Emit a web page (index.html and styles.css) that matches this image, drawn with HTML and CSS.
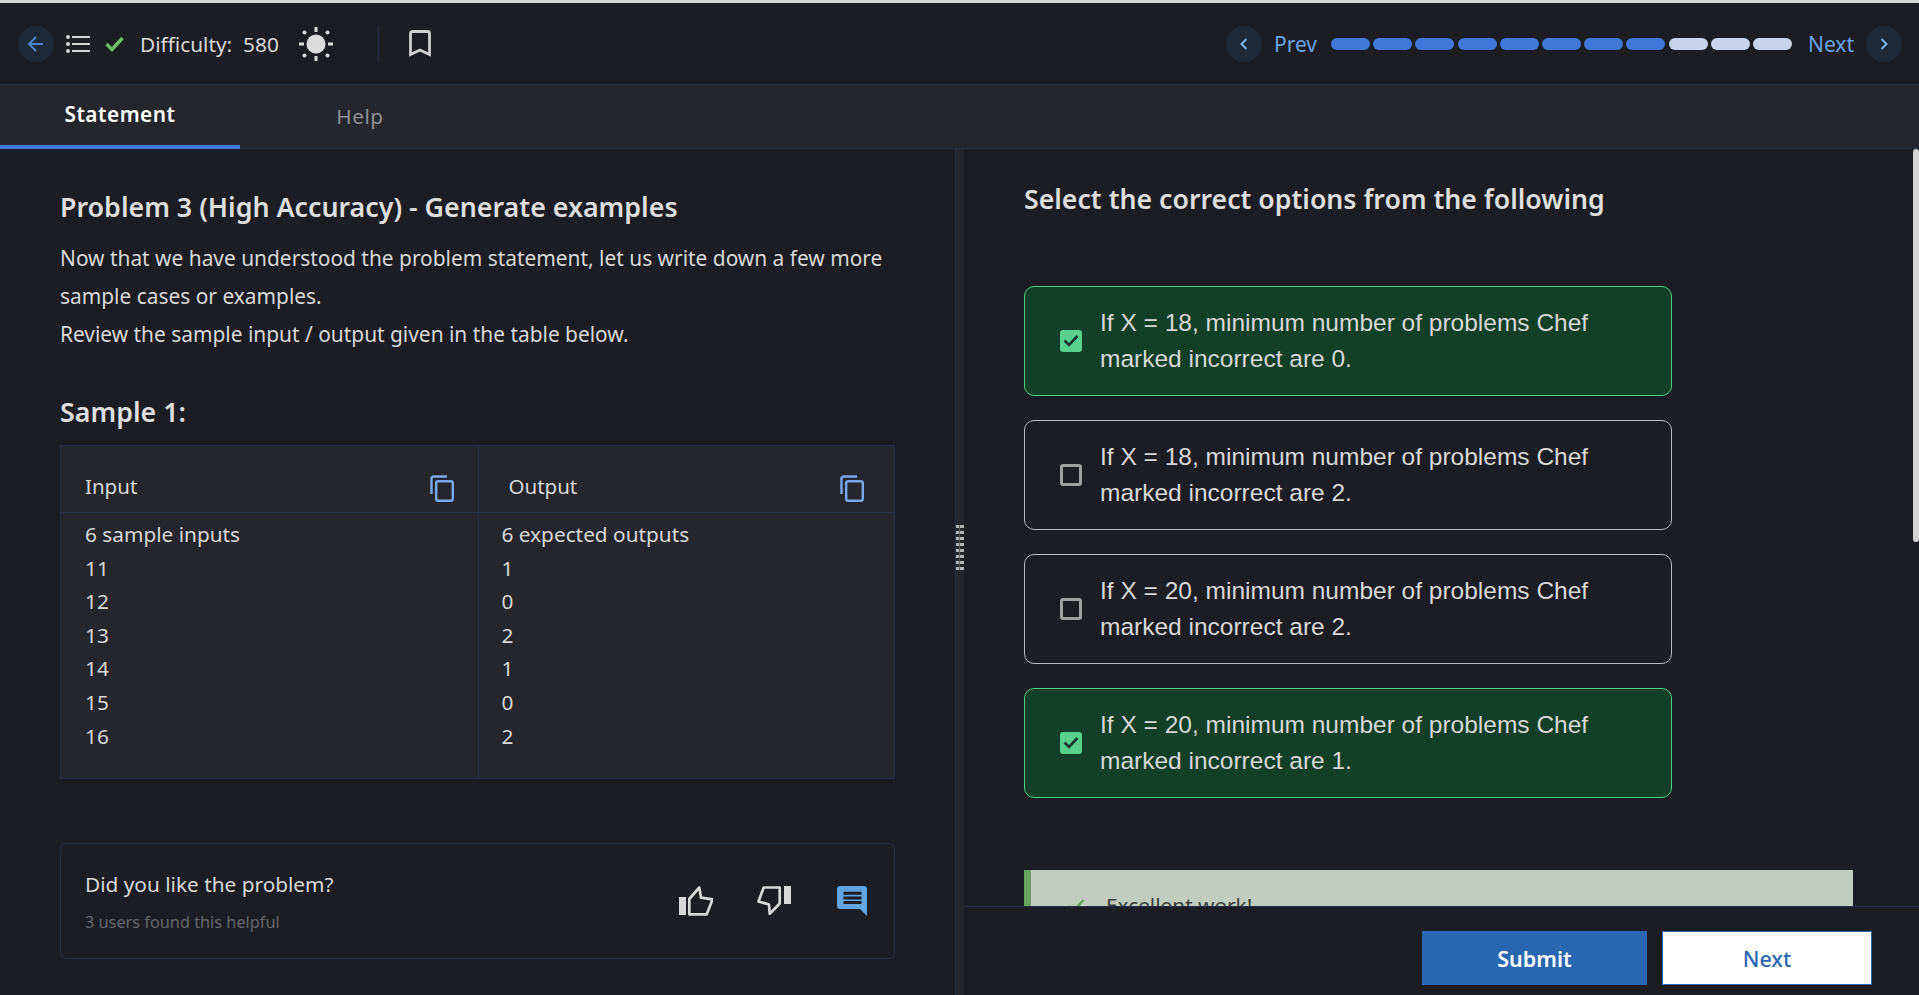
FILE: index.html
```html
<!DOCTYPE html>
<html lang="en">
<head>
  <meta charset="UTF-8" />
  <title>Problem 3 (High Accuracy) - Generate examples</title>
  <link rel="stylesheet" href="styles.css">
</head>
<body>
  <div class="topline"></div>

  <header class="header">
    <div class="header-left">
      <span class="round-btn">
        <svg width="20" height="20" viewBox="0 0 20 20" fill="none" stroke="#4f86c6" stroke-width="2"><path d="M17 10H3.500M10 3l-7 7 7 7"/></svg>
      </span>
      <svg class="list-icon" width="24" height="20" viewBox="0 0 24 20" fill="#d6d6d6"><circle cx="2" cy="3" r="2"/><circle cx="2" cy="10" r="2"/><circle cx="2" cy="17" r="2"/><rect x="6" y="2" width="18" height="2"/><rect x="6" y="9" width="18" height="2"/><rect x="6" y="16" width="18" height="2"/></svg>
      <svg class="check-icon" width="19" height="16" viewBox="0 0 19 16" fill="none" stroke="#6fbf6b" stroke-width="3.400"><path d="M1.500 8l5.500 5.500L17.500 2"/></svg>
      <span class="difficulty">Difficulty:</span>
      <span class="rating">580</span>
      <svg class="sun-icon" width="34" height="34" viewBox="0 0 34 34" fill="#dcdcdc">
        <circle cx="17" cy="17" r="9.500"/>
        <rect x="15.500" y="0" width="3" height="5"/><rect x="15.500" y="29" width="3" height="5"/>
        <rect x="0" y="15.500" width="5" height="3"/><rect x="29" y="15.500" width="5" height="3"/>
        <circle cx="5.500" cy="5.500" r="2"/><circle cx="28.500" cy="5.500" r="2"/><circle cx="5.500" cy="28.500" r="2"/><circle cx="28.500" cy="28.500" r="2"/>
      </svg>
      <span class="vline"></span>
      <svg class="bookmark-icon" width="22" height="27" viewBox="0 0 22 27" fill="none" stroke="#d0d0d0" stroke-width="2.800"><path d="M3.500 1.500h15a2 2 0 0 1 2 2v21L11 20 1.500 24.500v-21a2 2 0 0 1 2-2z"/></svg>
    </div>
    <div class="header-right">
      <span class="round-btn">
        <svg width="12" height="14" viewBox="0 0 12 14" fill="none" stroke="#7fb0e6" stroke-width="2"><path d="M8.500 2L3.500 7l5 5"/></svg>
      </span>
      <span class="nav-text prev">Prev</span>
      <div class="progress">
        <span class="seg done"></span><span class="seg done"></span><span class="seg done"></span><span class="seg done"></span>
        <span class="seg done"></span><span class="seg done"></span><span class="seg done"></span><span class="seg done"></span>
        <span class="seg"></span><span class="seg"></span><span class="seg"></span>
      </div>
      <span class="nav-text next">Next</span>
      <span class="round-btn">
        <svg width="12" height="14" viewBox="0 0 12 14" fill="none" stroke="#7fb0e6" stroke-width="2"><path d="M3.500 2l5 5-5 5"/></svg>
      </span>
    </div>
  </header>

  <nav class="tabs">
    <div class="tab active">Statement</div>
    <div class="tab">Help</div>
  </nav>

  <main class="panes">
    <section class="left-pane">
      <h2 class="title">Problem 3 (High Accuracy) - Generate examples</h2>
      <p class="statement">Now that we have understood the problem statement, let us write down a few more sample cases or examples.<br>Review the sample input / output given in the table below.</p>
      <h3 class="sample-title">Sample 1:</h3>

      <div class="sample">
        <div class="sample-col">
          <div class="sample-head">
            <span>Input</span>
            <svg class="copy-icon" width="24" height="27" viewBox="0 0 24 27" fill="none" stroke="#7aa7ee" stroke-width="2.400"><path d="M1.500 19V3.500a2 2 0 0 1 2-2H17"/><rect x="6.200" y="6.200" width="16.600" height="19.600" rx="2"/></svg>
          </div>
          <div class="sample-body">6 sample inputs<br>11<br>12<br>13<br>14<br>15<br>16</div>
        </div>
        <div class="sample-col">
          <div class="sample-head output-head">
            <span>Output</span>
            <svg class="copy-icon" width="24" height="27" viewBox="0 0 24 27" fill="none" stroke="#7aa7ee" stroke-width="2.400"><path d="M1.500 19V3.500a2 2 0 0 1 2-2H17"/><rect x="6.200" y="6.200" width="16.600" height="19.600" rx="2"/></svg>
          </div>
          <div class="sample-body output-body">6 expected outputs<br>1<br>0<br>2<br>1<br>0<br>2</div>
        </div>
      </div>

      <div class="feedback">
        <div>
          <div class="feedback-q">Did you like the problem?</div>
          <div class="feedback-sub">3 users found this helpful</div>
        </div>
        <div class="feedback-icons">
          <svg width="34" height="30" viewBox="0 0 34 30"><rect y="11" width="7" height="18" fill="#d8d8d8"/><path d="M10.300 13L20.300 1.500 22 11.700l11.600 1.600-5.900 15H10.300z" fill="none" stroke="#d8d8d8" stroke-width="2.700" stroke-linejoin="round"/></svg>
          <svg width="34" height="30" viewBox="0 0 34 30"><rect x="27" width="7" height="18" fill="#d8d8d8"/><path d="M1.500 15.500L6.700 1.500h16v16l-10 10.200-.7-9.200z" fill="none" stroke="#d8d8d8" stroke-width="2.700" stroke-linejoin="round"/></svg>
          <svg class="comment-icon" width="30" height="30" viewBox="0 0 30 30"><path fill="#62a4e0" d="M3 0h24a3 3 0 0 1 3 3v27l-7-7H3a3 3 0 0 1-3-3V3a3 3 0 0 1 3-3z"/><path fill="#1c1d22" d="M6.500 5.700h18v3h-18zM6.500 10.400h18v3h-18zM6.500 15h18v3h-18z"/></svg>
        </div>
      </div>
    </section>

    <div class="splitter">
      <div class="grip"></div>
    </div>

    <section class="right-pane">
      <div class="right-scroll">
        <h2 class="question">Select the correct options from the following</h2>
        <div class="options">
          <label class="option correct">
            <span class="box"><svg width="16" height="13" viewBox="0 0 16 13" fill="none" stroke="#17392a" stroke-width="2.600"><path d="M1.500 6.500l4.500 4.500L14.500 2"/></svg></span>
            <span>If X = 18, minimum number of problems Chef<br>marked incorrect are 0.</span>
          </label>
          <label class="option">
            <span class="box"></span>
            <span>If X = 18, minimum number of problems Chef<br>marked incorrect are 2.</span>
          </label>
          <label class="option">
            <span class="box"></span>
            <span>If X = 20, minimum number of problems Chef<br>marked incorrect are 2.</span>
          </label>
          <label class="option correct">
            <span class="box"><svg width="16" height="13" viewBox="0 0 16 13" fill="none" stroke="#17392a" stroke-width="2.600"><path d="M1.500 6.500l4.500 4.500L14.500 2"/></svg></span>
            <span>If X = 20, minimum number of problems Chef<br>marked incorrect are 1.</span>
          </label>
        </div>
        <div class="alert">
          <svg width="18" height="15" viewBox="0 0 18 15" fill="none" stroke="#66a35e" stroke-width="2.600"><path d="M1.500 8l5 5L16.500 2"/></svg>
          <span>Excellent work!</span>
        </div>
        <div class="scroll-thumb"></div>
      </div>
      <footer class="actions">
        <button class="btn btn-submit" type="button">Submit</button>
        <button class="btn btn-next" type="button">Next</button>
      </footer>
    </section>
  </main>
</body>
</html>
```

FILE: styles.css
```css
* { box-sizing: border-box; }
body {
  margin: 0;
  height: 995px;
  overflow: hidden;
  display: flex;
  flex-direction: column;
  background: #1c1d22;
  color: #d8d8d8;
  font-family: "Noto Sans", sans-serif;
}
svg { display: block; flex: none; }

.topline {
  height: 3px;
  background: #d4d4d4;
}

/* header */
.header {
  height: 82px;
  padding: 0 17px 0 18px;
  display: flex;
  align-items: center;
  justify-content: space-between;
  background: #1c1d22;
  border-bottom: 1px solid #252f48;
}
.header-left, .header-right {
  display: flex;
  align-items: center;
}
.round-btn {
  width: 36px;
  height: 36px;
  border-radius: 50%;
  background: #1d2838;
  display: flex;
  align-items: center;
  justify-content: center;
}
.list-icon { margin-left: 12px; }
.check-icon { margin-left: 15px; }
.difficulty {
  margin-left: 16px;
  font-size: 20.8px;
}
.rating {
  margin-left: 11px;
  font-size: 20.8px;
}
.sun-icon { margin-left: 20px; }
.vline {
  width: 1px;
  height: 36px;
  margin-left: 45px;
  background: #252f48;
}
.bookmark-icon { margin-left: 30px; }

.nav-text {
  font-size: 21px;
  color: #6ba4e3;
}
.prev { margin: 0 14px 0 12px; }
.next { margin: 0 12px 0 16px; }
.progress {
  display: flex;
  gap: 3.2px;
}
.seg {
  width: 39px;
  height: 12px;
  border-radius: 6px;
  background: #c8d4ea;
}
.seg.done { background: #3f78d9; }

/* tabs */
.tabs {
  height: 64px;
  display: flex;
  background: #25262b;
  border-bottom: 1px solid #252f48;
}
.tab {
  width: 240px;
  height: 64px;
  padding-bottom: 2px;
  display: flex;
  align-items: center;
  justify-content: center;
  font-size: 20.8px;
  letter-spacing: 0.5px;
  color: #8f9094;
}
.tab.active {
  color: #fff;
  font-weight: 600;
  padding: 0 0 2px;
  border-bottom: 4px solid #3f78d9;
}

/* panes */
.panes {
  flex: 1;
  min-height: 0;
  display: flex;
}
.left-pane {
  width: 956px;
  padding: 0 60px;
  border-right: 1px solid #252f48;
}
.title {
  margin: 39px 0 0;
  font-size: 26.8px;
  line-height: 38px;
  font-weight: 600;
  color: #dedede;
}
.statement {
  margin: 13px 0 0;
  font-size: 20.9px;
  line-height: 38px;
}
.sample-title {
  margin: 41px 0 0;
  font-size: 26.8px;
  line-height: 36px;
  font-weight: 600;
  color: #dedede;
}

.sample {
  margin-top: 15px;
  height: 334px;
  display: flex;
  background: #25262b;
  border: 1px solid #252f48;
}
.sample-col { width: 50%; }
.sample-col + .sample-col { border-left: 1px solid #252f48; }
.sample-head {
  height: 67px;
  padding: 13px 24px 0 24px;
  display: flex;
  align-items: center;
  justify-content: space-between;
  border-bottom: 1px solid #252f48;
  font-size: 20.5px;
}
.copy-icon { margin-top: 6px; }
.output-head { padding: 13px 30px 0 30px; }
.sample-body {
  padding: 5px 24px 0;
  font-size: 20.8px;
  line-height: 33.6px;
}
.output-body { padding-left: 23px; }

.feedback {
  margin-top: 64px;
  height: 116px;
  padding: 0 27px 0 24px;
  display: flex;
  align-items: center;
  justify-content: space-between;
  border: 1px solid #252f48;
  border-radius: 6px;
}
.feedback-q { font-size: 20.8px; line-height: 30px; }
.feedback-sub {
  margin-top: 11px;
  font-size: 16.3px;
  line-height: 24px;
  color: #66676b;
}
.feedback-icons {
  display: flex;
  align-items: center;
  gap: 44px;
}
.comment-icon { margin-left: 2px; }

.splitter {
  width: 8px;
  background: #25262b;
}
.grip {
  width: 8px;
  height: 45px;
  margin-top: 376px;
  background:
    linear-gradient(to right, transparent 3.5px, #5a5a5a 3.5px 4.5px, transparent 4.5px),
    repeating-linear-gradient(to bottom, #b5b5b5 0 3px, #25262b 3px 6px);
}

.right-pane {
  flex: 1;
  min-width: 0;
  display: flex;
  flex-direction: column;
}
.right-scroll {
  position: relative;
  flex: 1;
  min-height: 0;
  overflow: hidden;
  padding: 0 66px 0 60px;
}
.question {
  margin: 31px 0 0;
  font-size: 26.7px;
  line-height: 38px;
  font-weight: 600;
  color: #dedede;
}
.options {
  width: 648px;
  margin-top: 68px;
  display: flex;
  flex-direction: column;
  gap: 24px;
}
.option {
  height: 110px;
  padding-left: 35px;
  display: flex;
  align-items: center;
  gap: 18px;
  border: 1px solid #b7bcc0;
  border-radius: 10px;
  font-family: "Liberation Sans", sans-serif;
  font-size: 24.5px;
  line-height: 36px;
  color: #d8d8d8;
}
.option.correct {
  background: #123f27;
  border-color: #4fd08c;
}
.box {
  width: 22px;
  height: 22px;
  margin-bottom: 1px;
  flex: none;
  display: flex;
  align-items: center;
  justify-content: center;
  border: 3px solid #a0a0a0;
  border-radius: 3px;
}
.option.correct .box {
  background: #59d08e;
  border: none;
}
.alert {
  margin-top: 72px;
  height: 70px;
  padding-left: 36px;
  display: flex;
  align-items: center;
  gap: 21px;
  background: #c2ccc0;
  border-left: 7px solid #66a35e;
  font-size: 20.8px;
  color: #3a3d3a;
}
.scroll-thumb {
  position: absolute;
  top: 0;
  right: 0;
  width: 6px;
  height: 393px;
  border-radius: 3px;
  background: #d4d4d4;
}

.actions {
  height: 89px;
  padding: 24px 47px 0 0;
  display: flex;
  justify-content: flex-end;
  gap: 15px;
  border-top: 1px solid #252f48;
}
.btn {
  height: 54px;
  font-family: "Noto Sans", sans-serif;
  font-size: 21.5px;
  border-radius: 0;
  cursor: pointer;
}
.btn-submit {
  width: 225px;
  font-weight: 600;
  color: #fff;
  background: #2a67b1;
  border: none;
}
.btn-next {
  width: 210px;
  font-weight: 500;
  color: #2a67b1;
  background: #fff;
  border: 1px solid #2a67b1;
}
```
